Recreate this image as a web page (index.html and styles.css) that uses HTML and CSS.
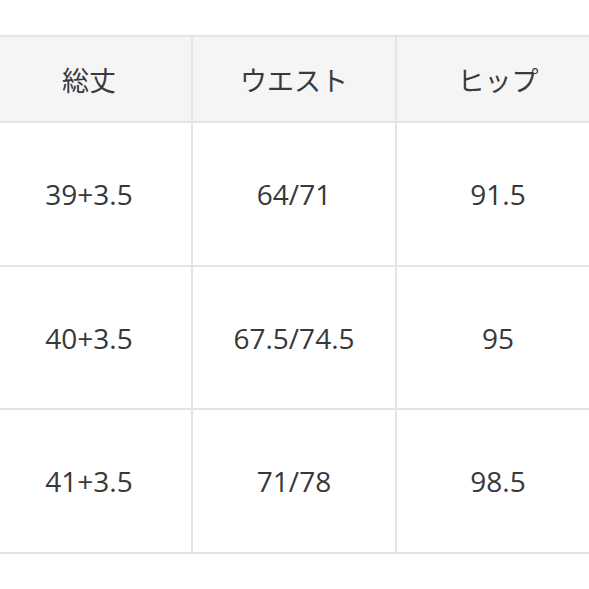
FILE: index.html
```html
<!DOCTYPE html>
<html lang="ja">
<head>
<meta charset="utf-8">
<link rel="stylesheet" href="styles.css">
</head>
<body>
<div class="page">
  <div class="size-table">
    <div class="cell head">総丈</div>
    <div class="cell head">ウエスト</div>
    <div class="cell head">ヒップ</div>
    <div class="cell">39+3.5</div>
    <div class="cell">64/71</div>
    <div class="cell">91.5</div>
    <div class="cell">40+3.5</div>
    <div class="cell">67.5/74.5</div>
    <div class="cell">95</div>
    <div class="cell">41+3.5</div>
    <div class="cell">71/78</div>
    <div class="cell">98.5</div>
  </div>
</div>
</body>
</html>
```

FILE: styles.css
```css
html, body {
  margin: 0;
  padding: 0;
  background: #ffffff;
  overflow: hidden;
}
.page {
  width: 589px;
  height: 589px;
  padding-top: 35px;
  box-sizing: border-box;
  overflow: hidden;
}
.size-table {
  display: grid;
  grid-template-columns: 206px 204px 204px;
  grid-template-rows: 86px 144px 143px 144px;
  margin-left: -13px;
  width: 614px;
  border-top: 2px solid #e4e4e4;
}
.cell {
  display: flex;
  align-items: center;
  justify-content: center;
  border-right: 2px solid #e4e4e4;
  border-bottom: 2px solid #e4e4e4;
  font-family: "Open Sans", "Noto Sans CJK JP", sans-serif;
  font-size: 28px;
  color: #383838;
  background: #ffffff;
}
.cell.head {
  font-family: "Noto Sans CJK JP", sans-serif;
  font-size: 27px;
  font-weight: 400;
  color: #3a3a3a;
  background: #f5f5f5;
}
```
